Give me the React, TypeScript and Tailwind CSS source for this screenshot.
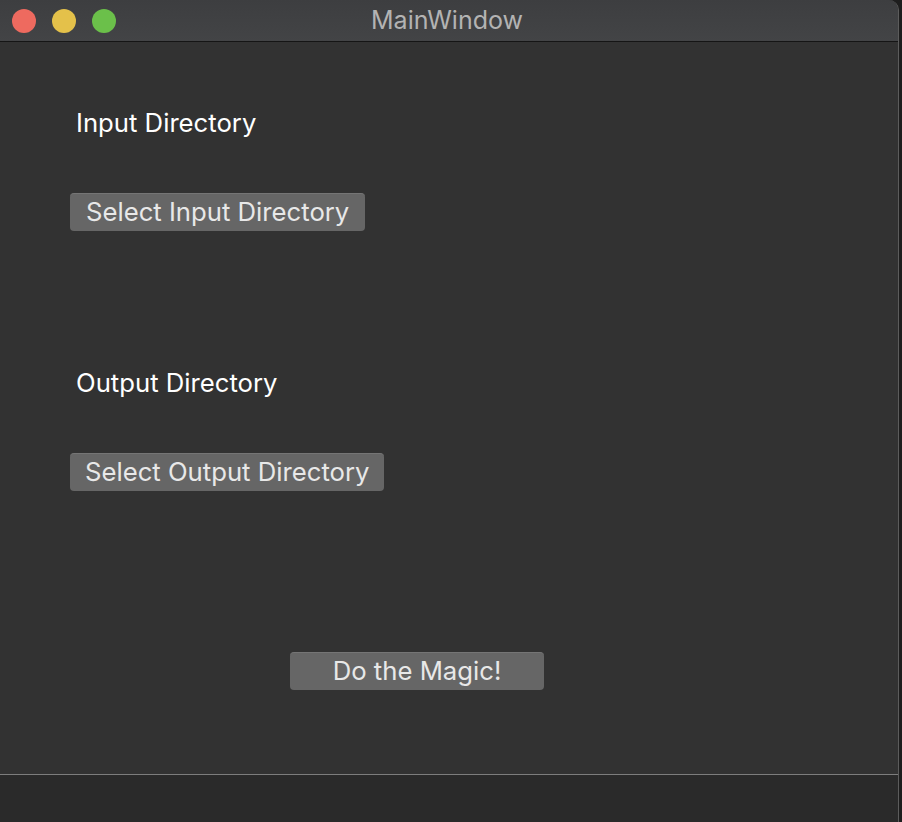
import React from "react";

export default function App() {
  const font = { fontFamily: "Inter, 'Helvetica Neue', Arial, sans-serif" };
  return (
    <div className="w-[902px] h-[822px] bg-[#1e1e1e] flex" style={font}>
      <div className="w-[899px] h-full flex flex-col bg-[#323232] border-r border-[#5c5c5c] rounded-tr-[10px] overflow-hidden">
        {/* Title bar */}
        <div className="h-[42px] shrink-0 bg-gradient-to-b from-[#3d3e40] to-[#434446] border-b border-[#151515] relative flex items-center">
          <div className="flex items-center gap-[16px] pl-[12px]">
            <div className="w-[24px] h-[24px] rounded-full bg-[#ee6a5f]" />
            <div className="w-[24px] h-[24px] rounded-full bg-[#e4c14a]" />
            <div className="w-[24px] h-[24px] rounded-full bg-[#6bc04a]" />
          </div>
          <div className="absolute inset-0 flex items-center justify-center text-[25px] text-[#b3b3b3]">
            <span className="ml-[-4px]">MainWindow</span>
          </div>
        </div>
        {/* Content */}
        <div className="flex-1 flex flex-col">
          <div className="mt-[66px] ml-[76px] h-[30px] leading-[30px] text-[25.7px] text-white">Input Directory</div>
          <div className="mt-[55px] ml-[70px]">
            <button className="h-[38px] px-[16px] pb-[2px] rounded-[4px] bg-[#666666] text-[#e8e8e8] text-[25.7px] leading-[30px] border-t border-[#757575]">
              Select Input Directory
            </button>
          </div>
          <div className="mt-[137px] ml-[76px] h-[30px] leading-[30px] text-[25.7px] text-white">Output Directory</div>
          <div className="mt-[55px] ml-[70px]">
            <button className="h-[38px] px-[15px] pb-[2px] rounded-[4px] bg-[#666666] text-[#e8e8e8] text-[25.7px] leading-[30px] border-t border-[#757575]">
              Select Output Directory
            </button>
          </div>
          <div className="mt-[161px] ml-[290px]">
            <button className="w-[254px] h-[38px] pb-[2px] rounded-[4px] bg-[#666666] text-[#e8e8e8] text-[25.7px] leading-[30px] border-t border-[#757575]">
              Do the Magic!
            </button>
          </div>
        </div>
        {/* Status bar */}
        <div className="h-[48px] shrink-0 bg-[#2a2a2a] border-t border-[#7d7d7d]" />
      </div>
    </div>
  );
}
